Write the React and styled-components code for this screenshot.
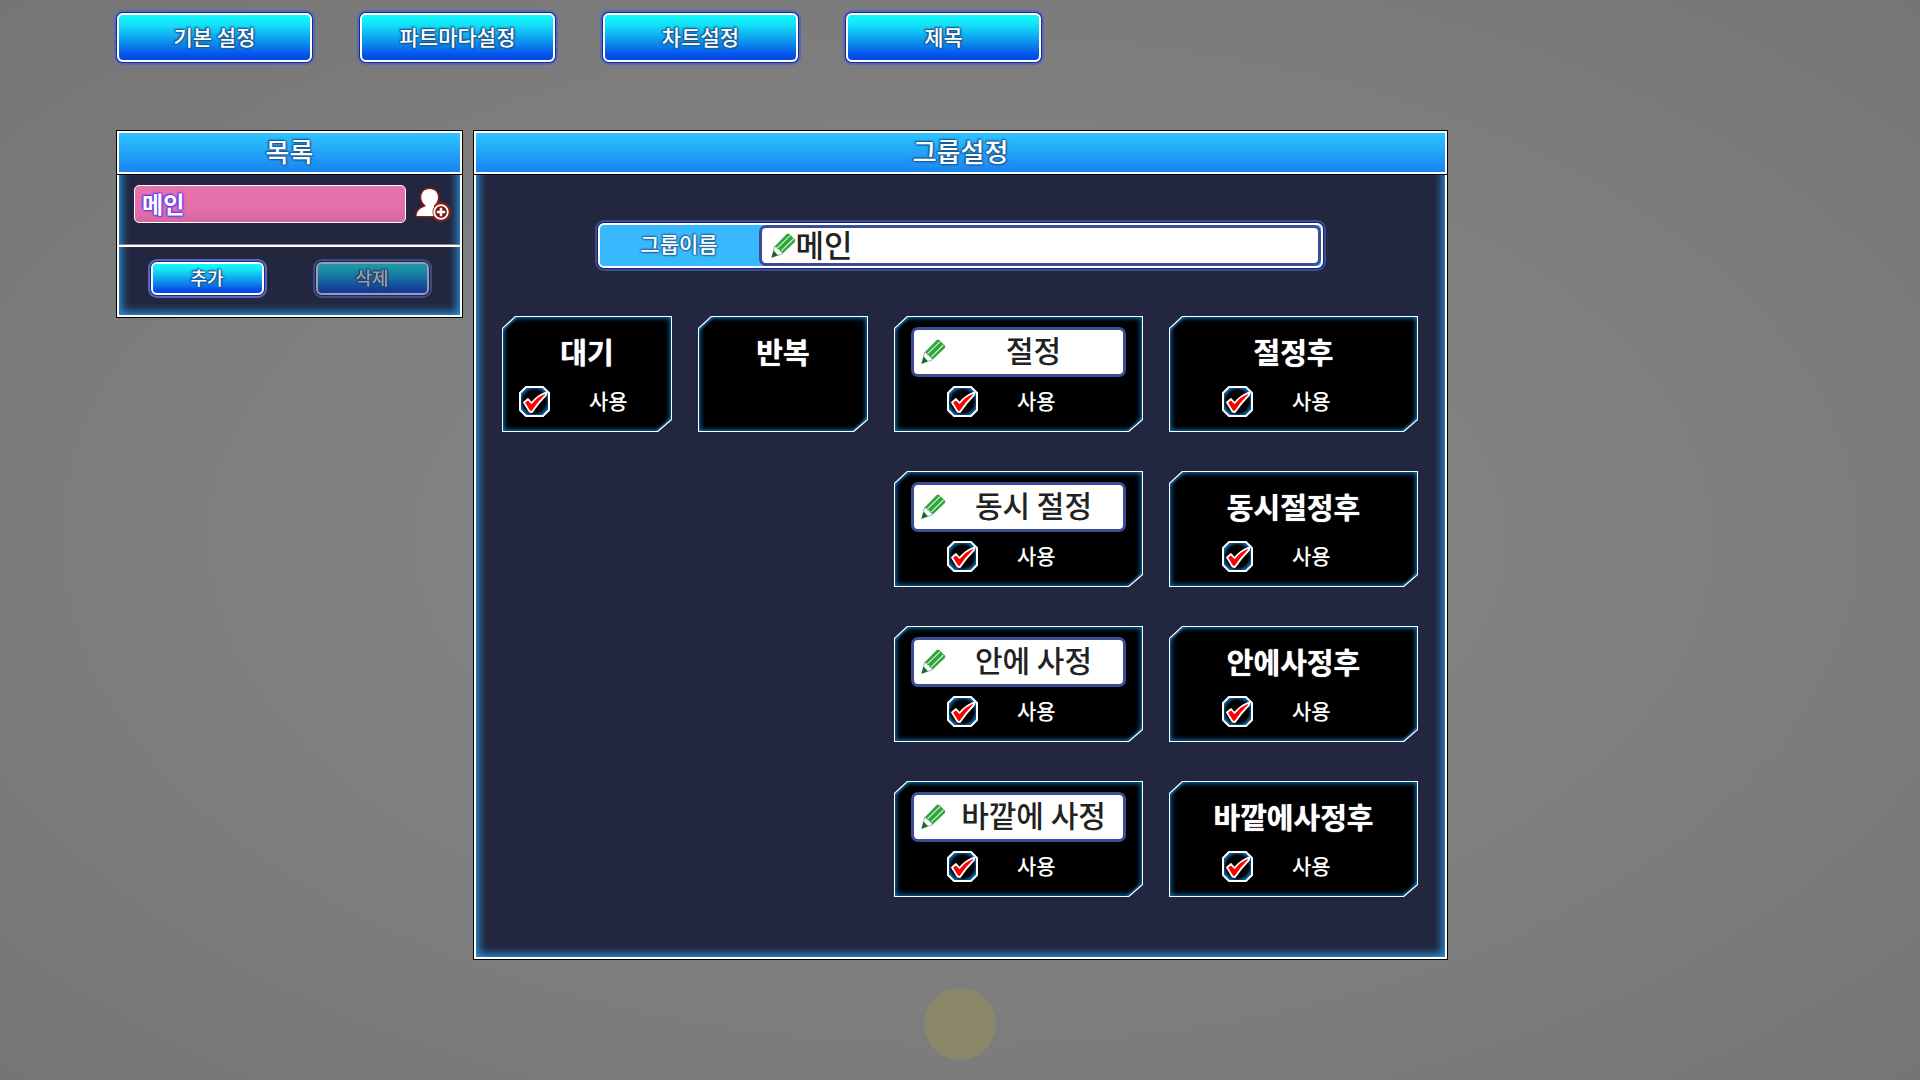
import React, { useState } from "react";
import styled, { createGlobalStyle, css } from "styled-components";

const GlobalStyle = createGlobalStyle`
  *, *::before, *::after { box-sizing: border-box; }
  body {
    margin: 0;
    font-family: "Noto Sans CJK KR", "Noto Sans", sans-serif;
    background: #808080;
  }
  button, input { font-family: inherit; }
`;

const outline = (color) => css`
  text-shadow: 1px 0 1px ${color}, -1px 0 1px ${color}, 0 1px 1px ${color},
    0 -1px 1px ${color}, 1px 1px 2px ${color}, -1px -1px 2px ${color};
`;

const Page = styled.div`
  min-height: 100vh;
  display: flex;
  flex-direction: column;
  background: radial-gradient(ellipse at center, #868686 0%, #808080 50%, #757575 100%);
`;

const TopBar = styled.nav`
  display: flex;
  gap: 48px;
  padding: 13px 117px 0;
`;

const GlossButton = styled.button`
  display: flex;
  align-items: center;
  justify-content: center;
  padding: 0 0 4px;
  width: ${(p) => (p.$small ? 113 : 195)}px;
  height: ${(p) => (p.$small ? 33 : 49)}px;
  border: 2px solid #fff;
  border-radius: 6px;
  background: linear-gradient(#12fbfd 0%, #14e4f8 20%, #0e9cee 55%, #0653ea 88%, #0448e8 100%) padding-box;
  box-shadow: 0 0 0 1px #1c2a78, 0 0 0 3px #5468c0;
  color: #fff;
  font-size: ${(p) => (p.$small ? 18 : 21)}px;
  line-height: 24px;
  font-weight: 500;
  ${outline("#1b5c96")}
  &:disabled { opacity: 0.55; }
`;

const Workspace = styled.main`
  display: flex;
  align-items: flex-start;
  gap: 10px;
  padding: 68px 472px 0 116px;
`;

const Panel = styled.section`
  flex: ${(p) => (p.$grow ? "1 1 0" : "0 0 347px")};
  min-width: 0;
  border: 1px solid #000;
`;

const PanelTitle = styled.h2`
  margin: 0;
  height: 43px;
  border: 2px solid #fff;
  box-shadow: 0 1px 0 #000;
  position: relative;
  background: linear-gradient(#2dc4ff, #1a84f2);
  color: #fff;
  font-size: 26px;
  line-height: 36px;
  font-weight: 500;
  text-align: center;
  ${outline("#1a5f9c")}
`;

const PanelBody = styled.div`
  border: 2px solid #fff;
  border-top: 0;
  background: #22263f;
  box-shadow: inset 9px 0 9px -6px #2a8fd4, inset -9px 0 9px -6px #2a8fd4,
    inset 0 -9px 9px -6px #2a8fd4;
`;

const GroupRow = styled.div`
  display: flex;
  align-items: flex-start;
  gap: 8px;
  height: 71px;
  padding: 11px 8px 0 15px;
`;

const GroupItem = styled.button`
  flex: 1;
  height: 38px;
  padding: 0 7px 2px;
  border: 1px solid #fff;
  border-radius: 5px;
  background: linear-gradient(#e573ae 0%, #e470ab 60%, #d667a0 100%);
  color: #fff;
  font-size: 23px;
  line-height: 32px;
  font-weight: 700;
  text-align: left;
  ${outline("#6a3cf0")}
`;

const IconButton = styled.button`
  width: 38px;
  height: 38px;
  padding: 0;
  border: 0;
  background: none;
  svg { display: block; overflow: visible; }
`;

const ListActions = styled.div`
  display: flex;
  justify-content: center;
  gap: 52px;
  padding: 15px 0 20px;
  border-top: 2px solid #fff;
  box-shadow: 0 -1px 0 #85858f;
`;

const Editor = styled(PanelBody)`
  padding: 49px 27px 60px 26px;
`;

const NameField = styled.label`
  display: flex;
  width: 725px;
  max-width: 100%;
  height: 45px;
  margin: 0 auto 48px;
  border: 2px solid #fff;
  border-radius: 6px;
  background: #38b9ff;
  box-shadow: 0 0 0 1px #14226c, 0 0 0 3px #3a4c92;
`;

const NameLabel = styled.span`
  flex: 0 0 159px;
  color: #fff;
  font-size: 21px;
  line-height: 36px;
  font-weight: 500;
  text-align: center;
  ${outline("#2272a8")}
`;

const TextBox = styled.span`
  display: flex;
  align-items: center;
  flex: 1;
  min-width: 0;
  height: ${(p) => (p.$card ? 50 : 41)}px;
  padding: ${(p) => (p.$card ? "0 2px 2px 7px" : "0 9px")};
  border: 3px solid #3c4d96;
  border-radius: 7px;
  background: #fff;
  svg { flex: none; }
`;

const TextInput = styled.input`
  flex: 1;
  min-width: 0;
  width: 100%;
  height: 34px;
  padding: 0 0 4px;
  border: 0;
  outline: 0;
  background: transparent;
  color: #222;
  font-size: ${(p) => (p.$card ? 30 : 31)}px;
  font-weight: 500;
  text-align: ${(p) => (p.$card ? "center" : "left")};
`;

const CardGrid = styled.div`
  display: grid;
  grid-template-columns: 170fr 170fr 249fr 249fr;
  gap: 39px 26px;
`;

const cut = "polygon(13px 0, 100% 0, 100% calc(100% - 12px), calc(100% - 14px) 100%, 0 100%, 0 12px)";

const Card = styled.article`
  grid-column: ${(p) => p.$column};
  height: 116px;
  padding: 1px;
  background: #fff;
  clip-path: ${cut};
`;

const CardFace = styled.div`
  height: 100%;
  padding: 10px 16px 0;
  clip-path: ${cut};
  background:
    linear-gradient(137deg, #0a5c98 9px, transparent 12px),
    linear-gradient(-43deg, #0a5c98 9px, transparent 12px),
    #000;
  box-shadow: inset 0 0 5px 1px #0a78c4;
`;

const CardHeading = styled.h3`
  margin: 0;
  height: 50px;
  color: #fff;
  font-size: 29px;
  line-height: 48px;
  font-weight: 700;
  text-align: center;
  text-shadow: 0 0 1px #fff;
`;

const TickLabel = styled.label`
  display: flex;
  align-items: flex-start;
  gap: 39px;
  margin-top: 9px;
  padding-left: ${(p) => (p.$wide ? 36 : 0)}px;
  color: #fff;
  font-size: 21px;
  line-height: 28px;
  font-weight: 500;
`;

const TickBox = styled.span`
  display: grid;
  width: 31px;
  height: 31px;
  > * { grid-area: 1 / 1; }
  input { width: 31px; height: 31px; margin: 0; opacity: 0; }
  input:not(:checked) + svg .mark { display: none; }
  svg { pointer-events: none; }
`;

const Footer = styled.footer`
  display: flex;
  justify-content: center;
  padding-top: 28px;
`;

const Orb = styled.button`
  width: 72px;
  height: 72px;
  padding: 0;
  border: 0;
  border-radius: 50%;
  background: #8b876a;
`;

const Pencil = () => (
  <svg width="25" height="25" viewBox="0 0 25 25" aria-hidden="true">
    <path d="M3.5 13.5 15.5 1.2Q17 0 18.5 1.2L23.6 6.2Q25 7.8 23.6 9.3L11.5 20.8Z" fill="#2fa63c" />
    <path d="M6.2 15.2 19 2.6M9.6 18.6 22.4 6" stroke="#d8f3da" strokeWidth="1.1" />
    <path d="M3.5 13.5Q6 13.2 6.5 15.8Q9.3 15.4 9.2 18.3Q11.8 18.4 11.5 20.8L1 24.4Z" fill="#fff" stroke="#2b7a35" strokeWidth=".5" />
    <path d="M2.6 17.5 7 22.2.4 24.8Z" fill="#17682a" />
  </svg>
);

const AddPerson = () => (
  <svg width="38" height="38" viewBox="0 0 38 38" aria-hidden="true">
    <g style={{ filter: "drop-shadow(0 0 1px #d2260e) drop-shadow(0 0 1px #b01c08)" }}>
      <path d="M15.500 4C20.500 4 24 7.600 24 12C24 15.500 22.500 18.500 20 20.200V22.500C23.500 23.500 26 25.500 27 31H2.500C3 25 7 22.800 11.500 21.500V20.200C8.800 18.500 7.300 15.500 7.300 12C7.300 7.600 10.500 4 15.500 4Z" fill="#fff" />
      <circle cx="27" cy="27" r="8.500" fill="#7a150c" />
      <circle cx="27" cy="27" r="6.800" fill="#7a150c" stroke="#fff" strokeWidth="1.800" />
      <path d="M27 22.800V31.200M22.800 27H31.200" stroke="#fff" strokeWidth="2.600" />
    </g>
  </svg>
);

const TickArt = () => (
  <svg width="31" height="31" viewBox="0 0 31 31" aria-hidden="true">
    <defs>
      <radialGradient id="tickGlow">
        <stop offset="75%" stopColor="#000" />
        <stop offset="100%" stopColor="#0b5e9c" />
      </radialGradient>
    </defs>
    <path d="M7 1H24L30 7V24L24 30H7L1 24V7Z" fill="url(#tickGlow)" stroke="#fff" strokeWidth="2" />
    <path className="mark" d="M5 16.500 9 13 12.500 17Q18 10 27 6.500Q28 7.500 26.500 9.500Q19 17 13 26L10.500 25.500Z" fill="#f00" stroke="#fff" strokeWidth="1.800" strokeLinejoin="round" />
  </svg>
);

const tabs = ["기본 설정", "파트마다설정", "차트설정", "제목"];

const cards = [
  { title: "대기", column: 1, tick: true },
  { title: "반복", column: 2 },
  { title: "절정", column: 3, tick: true, editable: true },
  { title: "절정후", column: 4, tick: true },
  { title: "동시 절정", column: 3, tick: true, editable: true },
  { title: "동시절정후", column: 4, tick: true },
  { title: "안에 사정", column: 3, tick: true, editable: true },
  { title: "안에사정후", column: 4, tick: true },
  { title: "바깥에 사정", column: 3, tick: true, editable: true },
  { title: "바깥에사정후", column: 4, tick: true },
];

function PartCard({ title, column, tick, editable }) {
  const [text, setText] = useState(title);
  return (
    <Card $column={column}>
      <CardFace>
        {editable ? (
          <TextBox $card>
            <Pencil />
            <TextInput $card aria-label={title} value={text} onChange={(e) => setText(e.target.value)} />
          </TextBox>
        ) : (
          <CardHeading>{title}</CardHeading>
        )}
        {tick && (
          <TickLabel $wide={column > 2}>
            <TickBox>
              <input type="checkbox" defaultChecked />
              <TickArt />
            </TickBox>
            사용
          </TickLabel>
        )}
      </CardFace>
    </Card>
  );
}

export default function App() {
  const [name, setName] = useState("메인");
  return (
    <Page>
      <GlobalStyle />
      <TopBar>
        {tabs.map((tab) => (
          <GlossButton key={tab}>{tab}</GlossButton>
        ))}
      </TopBar>
      <Workspace>
        <Panel>
          <PanelTitle>목록</PanelTitle>
          <PanelBody>
            <GroupRow>
              <GroupItem>메인</GroupItem>
              <IconButton aria-label="추가">
                <AddPerson />
              </IconButton>
            </GroupRow>
            <ListActions>
              <GlossButton $small>추가</GlossButton>
              <GlossButton $small disabled>삭제</GlossButton>
            </ListActions>
          </PanelBody>
        </Panel>
        <Panel $grow>
          <PanelTitle>그룹설정</PanelTitle>
          <Editor>
            <NameField>
              <NameLabel>그룹이름</NameLabel>
              <TextBox>
                <Pencil />
                <TextInput value={name} onChange={(e) => setName(e.target.value)} />
              </TextBox>
            </NameField>
            <CardGrid>
              {cards.map((card) => (
                <PartCard key={card.title} {...card} />
              ))}
            </CardGrid>
          </Editor>
        </Panel>
      </Workspace>
      <Footer>
        <Orb aria-label="메인" />
      </Footer>
    </Page>
  );
}
